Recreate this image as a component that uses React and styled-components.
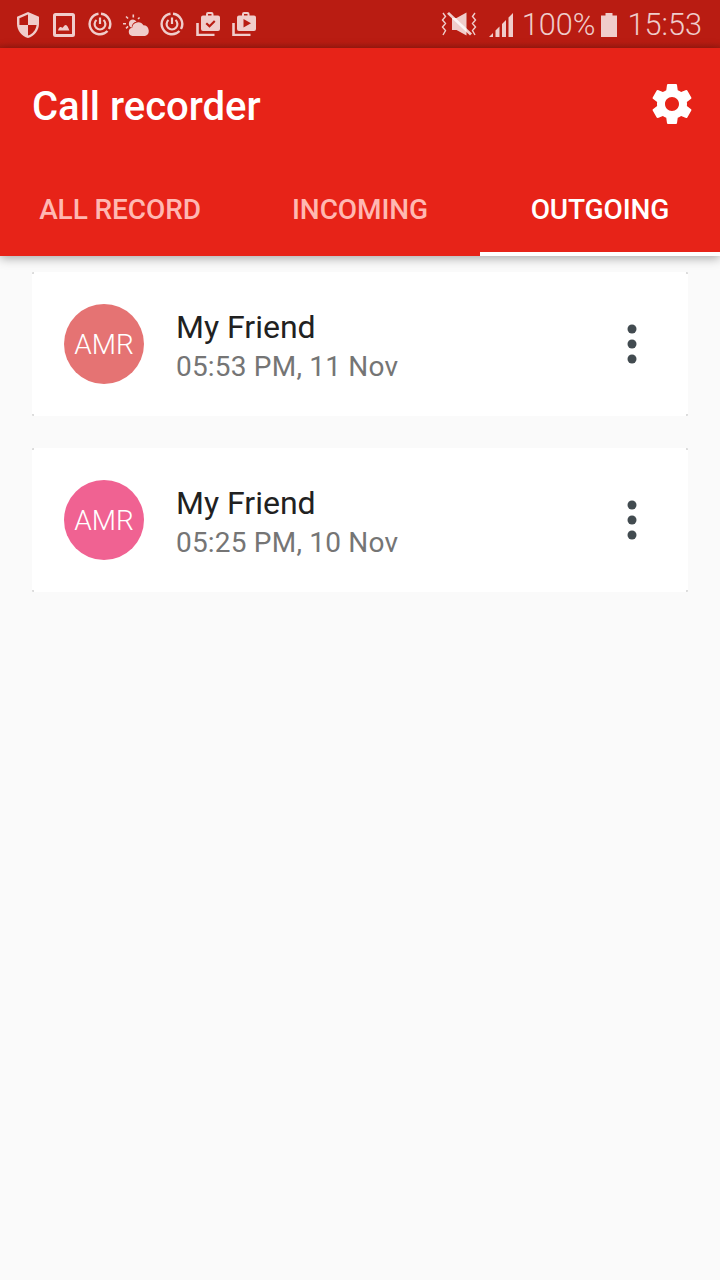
import styled, { createGlobalStyle } from "styled-components";

const GlobalStyle = createGlobalStyle`
  html, body {
    margin: 0;
    padding: 0;
    background: #fafafa;
    font-family: Roboto, sans-serif;
  }
`;

const Page = styled.div`
  width: 720px;
  height: 1280px;
  display: flex;
  flex-direction: column;
  overflow: hidden;
  background: #fafafa;
`;

const StatusBar = styled.div`
  height: 48px;
  display: flex;
  align-items: center;
  justify-content: space-between;
  padding: 0 18px 0 17px;
  box-sizing: border-box;
  background: linear-gradient(#b91c12 0, #b91c12 42px, #a81a10 48px);
  color: rgba(255, 255, 255, 0.78);
`;

const StatusGroup = styled.div`
  display: flex;
  align-items: center;
`;

const StatusIcon = styled.svg`
  display: block;
  width: ${(props) => props.$w || 24}px;
  height: ${(props) => props.$h || 24}px;
  margin-right: ${(props) => props.$gap || 0}px;
  margin-top: ${(props) => props.$mt || 0}px;
  fill: currentColor;
`;

const StatusText = styled.span`
  font-size: 30.7px;
  font-weight: 300;
  line-height: 48px;
  padding-top: 2px;
  margin-right: ${(props) => props.$gap || 0}px;
`;

const Header = styled.header`
  background: #e72318;
  box-shadow: 0 2px 10px rgba(0, 0, 0, 0.35);
  position: relative;
`;

const Toolbar = styled.div`
  height: 112px;
  box-sizing: border-box;
  display: flex;
  align-items: center;
  justify-content: space-between;
  padding: 0 24px 0 32px;
`;

const Title = styled.h1`
  margin: 4px 0 0;
  font-size: 40px;
  font-weight: 500;
  color: #fff;
`;

const Gear = styled.svg`
  display: block;
  width: 48px;
  height: 48px;
  fill: #fff;
`;

const Tabs = styled.div`
  display: flex;
  height: 96px;
`;

const Tab = styled.div`
  flex: 1;
  display: flex;
  align-items: center;
  justify-content: center;
  box-sizing: border-box;
  font-size: 28px;
  font-weight: 500;
  letter-spacing: -0.1px;
  color: ${(props) => (props.$active ? "#fff" : "#ffb8b2")};
  border-bottom: 4px solid ${(props) => (props.$active ? "#fff" : "transparent")};
  padding-top: 6px;
`;

const List = styled.div`
  display: flex;
  flex-direction: column;
  gap: 32px;
  padding: 16px 32px;
`;

const cornerMark = "linear-gradient(#dcdcdc, #dcdcdc)";

const Card = styled.div`
  height: 144px;
  display: flex;
  align-items: center;
  padding: 0 32px;
  border-radius: 1px;
  background:
    ${cornerMark} 0 0 / 2px 2px no-repeat,
    ${cornerMark} 100% 0 / 2px 2px no-repeat,
    ${cornerMark} 0 100% / 2px 2px no-repeat,
    ${cornerMark} 100% 100% / 2px 2px no-repeat,
    #fff;
`;

const Avatar = styled.div`
  width: 80px;
  height: 80px;
  border-radius: 50%;
  display: flex;
  align-items: center;
  justify-content: center;
  flex-shrink: 0;
  margin-right: 32px;
  background: ${(props) => props.color};
  color: #fff;
  font-size: 28px;
  font-weight: 300;
`;

const Info = styled.div`
  flex: 1;
  display: flex;
  flex-direction: column;
  padding-top: 6px;
`;

const Name = styled.div`
  font-size: 32px;
  line-height: 38px;
  color: #212121;
`;

const Time = styled.div`
  font-size: 28px;
  line-height: 38px;
  margin-top: 2px;
  letter-spacing: 0.2px;
  color: #757575;
`;

const More = styled.svg`
  display: block;
  width: 48px;
  height: 48px;
  fill: #424b50;
`;

const calls = [
  { color: "#e57373", time: "05:53 PM, 11 Nov" },
  { color: "#f06292", time: "05:25 PM, 10 Nov" },
];

const SpinIcon = ({ gap }) => (
  <StatusIcon $gap={gap} viewBox="0 0 24 24">
    <g fill="none" stroke="currentColor" strokeWidth="2.4">
      <path d="M13 1.800A10.300 10.300 0 0 1 21 17" />
      <path d="M19.500 19A10.300 10.300 0 1 1 10.500 1.800" />
      <path d="M8.500 8a5.400 5.400 0 1 0 7 0" strokeWidth="2.200" />
      <path d="M12 5.500v6.500" strokeWidth="2.200" />
    </g>
  </StatusIcon>
);

const App = () => {
  return (
    <Page>
      <GlobalStyle />
      <StatusBar>
        <StatusGroup>
          <StatusIcon $w={22} $h={26} $gap={14} $mt={2} viewBox="3 1 18 22" preserveAspectRatio="none">
            <path d="M12 1 3 5v6c0 5.550 3.840 10.740 9 12 5.160-1.260 9-6.450 9-12V5l-9-4zm0 10.990h7c-.53 4.120-3.280 7.790-7 8.940V12H5V6.300l7-3.110v8.800z" />
          </StatusIcon>
          <StatusIcon $w={22} $gap={13} $mt={2} viewBox="0 0 22 24">
            <path d="M2.500 0h17A2.500 2.500 0 0 1 22 2.500v19a2.500 2.500 0 0 1-2.500 2.500h-17A2.500 2.500 0 0 1 0 21.500v-19A2.500 2.500 0 0 1 2.500 0zM3 3v18h16V3zM5 17.500c.5-2 1.500-3.500 2.500-3.500s1.500.8 2 .8c.7 0 1.500-2.800 3-2.800 2 0 3 3.500 4 5.500z" fillRule="evenodd" />
          </StatusIcon>
          <SpinIcon gap={11} />
          <StatusIcon $w={26} $gap={11} viewBox="0 0 26 24">
            <path d="M9.500 2.500h1.600v3H9.500zM2.500 5l1.100-1.100 2 2-1.100 1.100zM0 11h3v1.600H0zM3.600 16.900l-1.100-1.100 2-2 1.100 1.100zM16 5l1.100 1.100-1.500 1.500-1.100-1.100z" />
            <path d="M10 7.500a4.200 4.200 0 0 0-1.200 8.200 5.200 5.200 0 0 1 4.700-5.900A4.200 4.200 0 0 0 10 7.500z" />
            <path d="M9.500 24a4.200 4.200 0 0 1-.3-8.300 6 6 0 0 1 11.200-2.400A5.500 5.500 0 0 1 22 24z" />
          </StatusIcon>
          <SpinIcon gap={12} />
          <StatusIcon $gap={12} viewBox="0 0 24 24">
            <path d="M1.500 11v12h17" fill="none" stroke="currentColor" strokeWidth="2.600" />
            <path d="M10 3.500V2a2 2 0 0 1 2-2h3.500a2 2 0 0 1 2 2v1.500h4.500a2 2 0 0 1 2 2V17a2 2 0 0 1-2 2H7a2 2 0 0 1-2-2V5.500a2 2 0 0 1 2-2zM12 2v1.500h3.500V2zM11 10.500 9.500 12l4 3.700 6-6-1.500-1.500-4.500 4.500z" fillRule="evenodd" />
          </StatusIcon>
          <StatusIcon viewBox="0 0 24 24">
            <path d="M1.500 11v12h17" fill="none" stroke="currentColor" strokeWidth="2.600" />
            <path d="M10 3.500V2a2 2 0 0 1 2-2h3.500a2 2 0 0 1 2 2v1.500h4.500a2 2 0 0 1 2 2V17a2 2 0 0 1-2 2H7a2 2 0 0 1-2-2V5.500a2 2 0 0 1 2-2zM12 2v1.500h3.500V2zM11.500 7v8.500l7.500-4.300z" fillRule="evenodd" />
          </StatusIcon>
        </StatusGroup>
        <StatusGroup>
          <StatusIcon $w={36} $h={24} $gap={12} viewBox="0 0 36 24">
            <path d="M11 6h4.500l10-5.500v23L15.500 18H11z" />
            <path d="M6 1.800 8 0l23 21.500-2 2z" />
            <path d="M2 1l2.500 3.500-3 3.500 3 3.500-3 3.500 3 3.500L2 23M34 1l-2.500 3.500 3 3.500-3 3.500 3 3.500-3 3.500L34 23" fill="none" stroke="currentColor" strokeWidth="1.400" />
          </StatusIcon>
          <StatusIcon $gap={9} $mt={1} viewBox="0 0 24 24">
            <path d="M0 24l4-4v4zM6.500 24V17.500l4-4V24zM13 24V11l4-4v17zM19.500 24V4.500L24 0v24z" />
          </StatusIcon>
          <StatusText $gap={6}>100%</StatusText>
          <StatusIcon $w={16} $h={24} $gap={10} $mt={1} viewBox="0 0 16 24">
            <path d="M4.500 0h7v2.500H16V24H0V2.500h4.500z" />
          </StatusIcon>
          <StatusText>15:53</StatusText>
        </StatusGroup>
      </StatusBar>
      <Header>
        <Toolbar>
          <Title>Call recorder</Title>
          <Gear viewBox="0 0 24 24">
            <path d="M19.430 12.980c.04-.32.07-.64.07-.98s-.03-.66-.07-.98l2.110-1.650c.19-.15.24-.42.12-.64l-2-3.460c-.12-.22-.39-.3-.61-.22l-2.490 1c-.52-.4-1.080-.73-1.690-.98l-.38-2.650C14.460 2.180 14.250 2 14 2h-4c-.25 0-.46.18-.49.42l-.38 2.650c-.61.25-1.170.59-1.690.98l-2.490-1c-.23-.09-.49 0-.61.22l-2 3.460c-.13.22-.07.49.12.64l2.110 1.650c-.04.32-.07.65-.07.98s.03.66.07.98l-2.110 1.650c-.19.15-.24.42-.12.64l2 3.460c.12.22.39.3.61.22l2.490-1c.52.4 1.080.73 1.690.98l.38 2.650c.03.24.24.42.49.42h4c.25 0 .46-.18.49-.42l.38-2.650c.61-.25 1.170-.59 1.690-.98l2.490 1c.23.09.49 0 .61-.22l2-3.460c.12-.22.07-.49-.12-.64l-2.110-1.650zM12 15.500c-1.930 0-3.500-1.570-3.500-3.500s1.570-3.500 3.500-3.500 3.500 1.570 3.500 3.500-1.570 3.500-3.500 3.500z" />
          </Gear>
        </Toolbar>
        <Tabs>
          <Tab>ALL RECORD</Tab>
          <Tab>INCOMING</Tab>
          <Tab $active>OUTGOING</Tab>
        </Tabs>
      </Header>
      <List>
        {calls.map((call) => (
          <Card key={call.time}>
            <Avatar color={call.color}>AMR</Avatar>
            <Info>
              <Name>My Friend</Name>
              <Time>{call.time}</Time>
            </Info>
            <More viewBox="0 0 48 48">
              <circle cx="24" cy="9" r="4.500" />
              <circle cx="24" cy="24" r="4.500" />
              <circle cx="24" cy="39" r="4.500" />
            </More>
          </Card>
        ))}
      </List>
    </Page>
  );
};

export default App;
